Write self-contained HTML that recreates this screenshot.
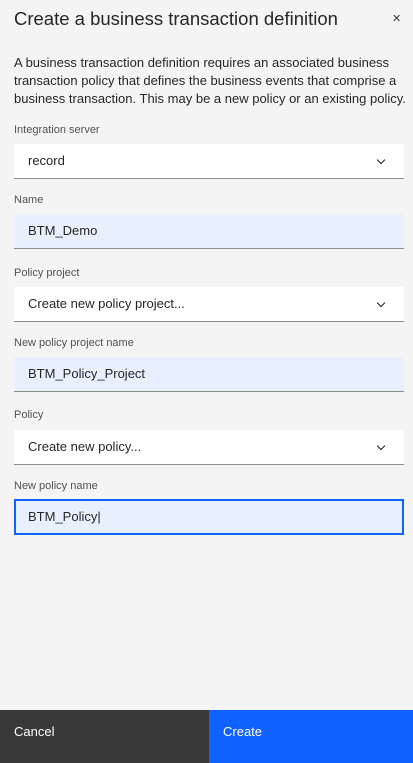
<!DOCTYPE html>
<html><head><meta charset="utf-8"><style>
*{margin:0;padding:0;box-sizing:border-box}
body{width:413px;height:763px;background:#f4f4f4;font-family:"Liberation Sans",sans-serif;color:#161616;position:relative;overflow:hidden}
.a{position:absolute}
.t{left:14px;top:8px;font-size:18.5px;color:#262626}
.x{left:392px;top:12px;font-size:11px;color:#393939}
.p{left:14px;top:54px;width:392px;font-size:13px;line-height:18px;color:#262626}
.l{left:14px;font-size:11px;color:#525252}
.f{left:14px;width:390px;height:35px;border-bottom:1px solid #8d8d8d;font-size:13px;padding-left:14px;line-height:34px;color:#262626}
.s{background:#fff}
.i{background:#e8effd}
.foc{border:2px solid #0f62fe;padding-left:12px;line-height:31px}
.c{position:absolute;right:20px;top:13px;width:6px;height:6px;border-right:1px solid #161616;border-bottom:1px solid #161616;transform:rotate(45deg)}
.b{top:710px;height:53px;font-size:13px;padding:14px;color:#fff}
</style></head><body>
<div class="a t">Create a business transaction definition</div>
<div class="a x">✕</div>
<div class="a p">A business transaction definition requires an associated business transaction policy that defines the business events that comprise a business transaction. This may be a new policy or an existing policy.</div>
<div class="a l" style="top:124px">Integration server</div>
<div class="a f s" style="top:144px">record<span class="c"></span></div>
<div class="a l" style="top:194px">Name</div>
<div class="a f i" style="top:214px">BTM_Demo</div>
<div class="a l" style="top:267px">Policy project</div>
<div class="a f s" style="top:287px">Create new policy project...<span class="c"></span></div>
<div class="a l" style="top:337px">New policy project name</div>
<div class="a f i" style="top:357px">BTM_Policy_Project</div>
<div class="a l" style="top:409px">Policy</div>
<div class="a f s" style="top:430px">Create new policy...<span class="c"></span></div>
<div class="a l" style="top:480px">New policy name</div>
<div class="a f i foc" style="top:499px;height:36px">BTM_Policy|</div>
<div class="a b" style="left:0;width:209px;background:#393939">Cancel</div>
<div class="a b" style="left:209px;width:204px;background:#0f62fe">Create</div>
</body></html>
